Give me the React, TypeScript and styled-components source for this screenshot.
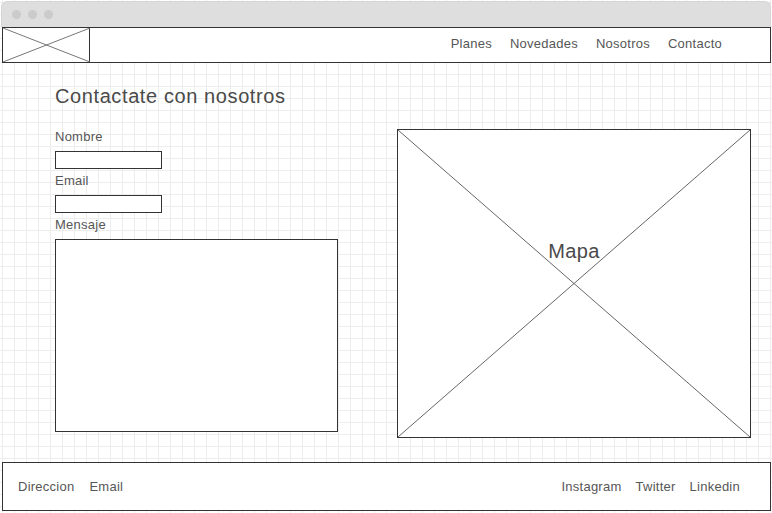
import React from "react";
import styled, { createGlobalStyle } from "styled-components";

const GlobalStyle = createGlobalStyle`
  html, body {
    margin: 0;
    padding: 0;
    background: #ffffff;
  }
  * {
    box-sizing: border-box;
  }
`;

const Frame = styled.div`
  width: 772px;
  height: 513px;
  padding: 1px 1px 0 1px;
  display: flex;
  flex-direction: column;
  font-family: "Liberation Sans", Arial, sans-serif;
  color: #555555;
  background-color: #ffffff;
  background-image: linear-gradient(to right, #ededed 1px, transparent 1px),
    linear-gradient(to bottom, #ededed 1px, transparent 1px);
  background-size: 12px 12px;
  background-position: 2px 2px;
  overflow: hidden;
`;

const TitleBar = styled.div`
  height: 26px;
  flex-shrink: 0;
  display: flex;
  align-items: center;
  gap: 7px;
  padding-left: 10px;
  background: #dedede;
  border: 1px solid #d6d6d6;
  border-bottom: none;
  border-radius: 6px 6px 0 0;
`;

const Dot = styled.span`
  width: 9px;
  height: 9px;
  border-radius: 50%;
  background: #cbcbcb;
`;

const Header = styled.header`
  margin-left: 1px;
  width: 769px;
  height: 36px;
  flex-shrink: 0;
  display: flex;
  align-items: center;
  justify-content: space-between;
  border: 1px solid #333333;
  background: #ffffff;
`;

const Logo = styled.div`
  width: 87px;
  height: 34px;
  border-right: 1px solid #333333;

  & > svg {
    display: block;
  }
`;

const Nav = styled.nav`
  display: flex;
  align-items: center;
  gap: 18px;
  padding-right: 48px;
  padding-bottom: 2px;
`;

const NavLink = styled.span`
  font-size: 13px;
  line-height: 16px;
  letter-spacing: 0.25px;
  color: #565656;
`;

const Main = styled.main`
  flex: 1;
  padding: 21px 0 0 54px;
`;

const Title = styled.h1`
  margin: 0 0 21px;
  font-size: 20px;
  line-height: 24px;
  font-weight: normal;
  letter-spacing: 0.6px;
  color: #4a4a4a;
`;

const Row = styled.div`
  display: flex;
  align-items: flex-start;
  gap: 59px;
`;

const Form = styled.div`
  width: 283px;
  display: flex;
  flex-direction: column;
  align-items: flex-start;
`;

const Label = styled.label`
  font-size: 13px;
  line-height: 16px;
  letter-spacing: 0.25px;
  color: #565656;
  margin-bottom: 6px;
`;

const Input = styled.div`
  width: 107px;
  height: 18px;
  border: 1px solid #333333;
  background: #ffffff;
  margin-bottom: 4px;
`;

const TextArea = styled.div`
  width: 283px;
  height: 193px;
  border: 1px solid #333333;
  background: #ffffff;
`;

const Map = styled.div`
  position: relative;
  width: 354px;
  height: 309px;
  border: 1px solid #333333;
  background: #ffffff;
  display: flex;
  justify-content: center;
  padding-top: 109px;

  & > svg {
    position: absolute;
    inset: 0;
  }
`;

const MapLabel = styled.span`
  position: relative;
  font-size: 20px;
  line-height: 24px;
  letter-spacing: 0.4px;
  color: #4a4a4a;
`;

const Footer = styled.footer`
  margin: 0 0 2px 1px;
  width: 769px;
  height: 49px;
  flex-shrink: 0;
  display: flex;
  align-items: center;
  justify-content: space-between;
  padding: 0 30px 0 15px;
  border: 1px solid #333333;
  background: #ffffff;
`;

const LinkGroup = styled.div<{ $gap: number }>`
  display: flex;
  align-items: center;
  gap: ${({ $gap }) => $gap}px;
`;

const FooterLink = styled.span`
  font-size: 13px;
  line-height: 16px;
  letter-spacing: 0.25px;
  color: #565656;
`;

function Cross({ w, h, color }: { w: number; h: number; color: string }) {
  return (
    <svg width={w} height={h} viewBox={`0 0 ${w} ${h}`}>
      <line x1={0} y1={0} x2={w} y2={h} stroke={color} strokeWidth={1} />
      <line x1={0} y1={h} x2={w} y2={0} stroke={color} strokeWidth={1} />
    </svg>
  );
}

export default function App(): React.JSX.Element {
  const navItems = ["Planes", "Novedades", "Nosotros", "Contacto"];

  return (
    <>
      <GlobalStyle />
      <Frame>
        <TitleBar>
          <Dot />
          <Dot />
          <Dot />
        </TitleBar>

        <Header>
          <Logo>
            <Cross w={87} h={34} color="#777777" />
          </Logo>
          <Nav>
            {navItems.map((item) => (
              <NavLink key={item}>{item}</NavLink>
            ))}
          </Nav>
        </Header>

        <Main>
          <Title>Contactate con nosotros</Title>
          <Row>
            <Form>
              <Label>Nombre</Label>
              <Input />
              <Label>Email</Label>
              <Input />
              <Label>Mensaje</Label>
              <TextArea />
            </Form>

            <Map>
              <Cross w={352} h={307} color="#666666" />
              <MapLabel>Mapa</MapLabel>
            </Map>
          </Row>
        </Main>

        <Footer>
          <LinkGroup $gap={15}>
            <FooterLink>Direccion</FooterLink>
            <FooterLink>Email</FooterLink>
          </LinkGroup>
          <LinkGroup $gap={14}>
            <FooterLink>Instagram</FooterLink>
            <FooterLink>Twitter</FooterLink>
            <FooterLink>Linkedin</FooterLink>
          </LinkGroup>
        </Footer>
      </Frame>
    </>
  );
}
